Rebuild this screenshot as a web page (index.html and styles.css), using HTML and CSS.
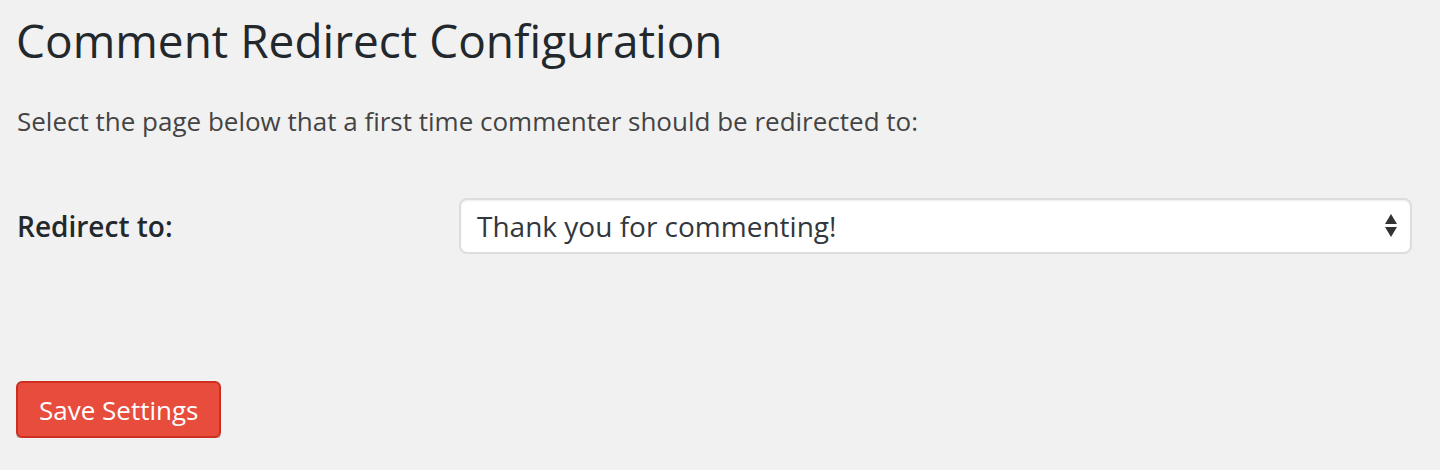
FILE: index.html
```html
<!DOCTYPE html>
<html lang="en">
<head>
<meta charset="utf-8">
<title>Comment Redirect Configuration</title>
<link rel="stylesheet" href="styles.css">
</head>
<body>
<div class="wrap">
  <h1 class="title">Comment Redirect Configuration</h1>
  <p class="intro">Select the page below that a first time commenter should be redirected to:</p>
  <div class="form-row">
    <label class="label" for="redirect">Redirect to:</label>
    <div class="select">
      <span class="select-text">Thank you for commenting!</span>
      <svg class="arrows" width="14" height="24" viewBox="0 0 14 24"><path d="M7 0 L13 10 H1 Z" fill="#333"/><path d="M1 13 H13 L7 23 Z" fill="#333"/></svg>
    </div>
  </div>
  <button class="btn">Save Settings</button>
</div>
</body>
</html>
```
FILE: styles.css
```css
html, body {
  margin: 0;
  padding: 0;
  background: #f1f1f1;
}
body {
  font-family: "Open Sans", "Liberation Sans", sans-serif;
  color: #444;
}
.wrap {
  padding: 0 0 0 16px;
  width: 1396px;
}
.title {
  margin: 0;
  padding-top: 10px;
  font-size: 46px;
  font-weight: 400;
  line-height: 60px;
  color: #23282d;
}
.intro {
  margin: 33px 0 0 1px;
  font-size: 26px;
  line-height: 36px;
  color: #444;
}
.form-row {
  display: flex;
  align-items: center;
  margin-top: 59px;
}
.label {
  width: 442px;
  padding-left: 1px;
  font-size: 28px;
  font-weight: 600;
  color: #23282d;
}
.select {
  flex: 1;
  display: flex;
  align-items: center;
  justify-content: space-between;
  height: 52px;
  padding: 0 12px 0 16px;
  background: #fff;
  border: 2px solid #ddd;
  border-radius: 8px;
  box-shadow: inset 0 1px 2px rgba(0,0,0,0.07);
}
.select-text {
  font-size: 28px;
  color: #32373c;
}
.arrows {
  display: block;
}
.btn {
  margin-top: 127px;
  display: block;
  height: 57px;
  padding: 0 21px;
  background: #e74c3c;
  border: 2px solid #cc2f1f;
  border-radius: 6px;
  box-shadow: 0 2px 0 #c0c0c0;
  color: #fff;
  font-family: "Open Sans", "Liberation Sans", sans-serif;
  font-size: 26px;
  line-height: 1;
}
```
